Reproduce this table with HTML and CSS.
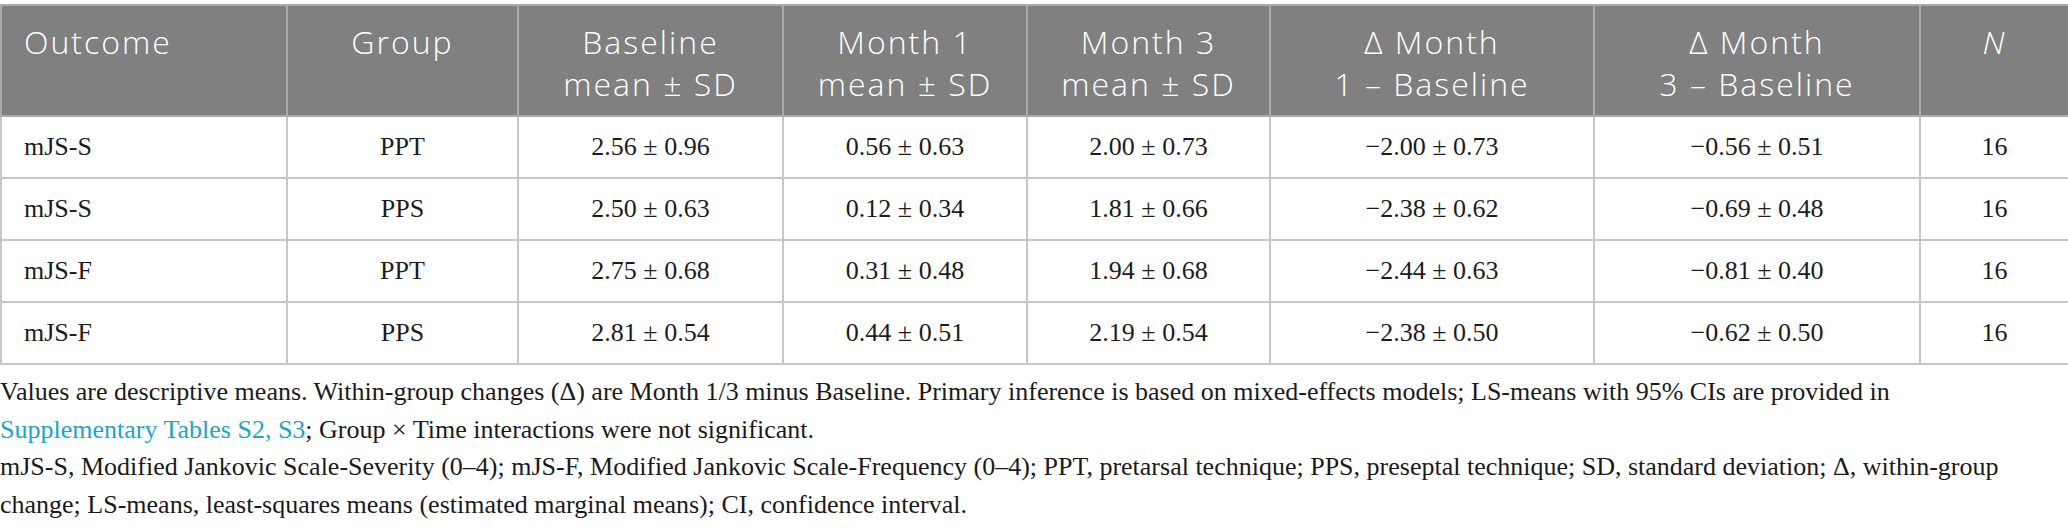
FILE: index.html
```html
<!DOCTYPE html>
<html lang="en">
<head>
<meta charset="utf-8">
<title>Table</title>
<link rel="stylesheet" href="styles.css">
</head>
<body>
<div class="wrap">
<table class="data">
  <colgroup>
    <col class="c1"><col class="c2"><col class="c3"><col class="c4"><col class="c5"><col class="c6"><col class="c7"><col class="c8">
  </colgroup>
  <thead>
    <tr>
      <th class="left">Outcome</th>
      <th>Group</th>
      <th>Baseline<br>mean ± SD</th>
      <th>Month 1<br>mean ± SD</th>
      <th>Month 3<br>mean ± SD</th>
      <th>Δ Month<br>1 – Baseline</th>
      <th>Δ Month<br>3 – Baseline</th>
      <th><i>N</i></th>
    </tr>
  </thead>
  <tbody>
    <tr><td class="left">mJS-S</td><td>PPT</td><td>2.56 ± 0.96</td><td>0.56 ± 0.63</td><td>2.00 ± 0.73</td><td>−2.00 ± 0.73</td><td>−0.56 ± 0.51</td><td>16</td></tr>
    <tr><td class="left">mJS-S</td><td>PPS</td><td>2.50 ± 0.63</td><td>0.12 ± 0.34</td><td>1.81 ± 0.66</td><td>−2.38 ± 0.62</td><td>−0.69 ± 0.48</td><td>16</td></tr>
    <tr><td class="left">mJS-F</td><td>PPT</td><td>2.75 ± 0.68</td><td>0.31 ± 0.48</td><td>1.94 ± 0.68</td><td>−2.44 ± 0.63</td><td>−0.81 ± 0.40</td><td>16</td></tr>
    <tr><td class="left">mJS-F</td><td>PPS</td><td>2.81 ± 0.54</td><td>0.44 ± 0.51</td><td>2.19 ± 0.54</td><td>−2.38 ± 0.50</td><td>−0.62 ± 0.50</td><td>16</td></tr>
  </tbody>
</table>
<div class="notes">
  <p>Values are descriptive means. Within-group changes (Δ) are Month 1/3 minus Baseline. Primary inference is based on mixed-effects models; LS-means with 95% CIs are provided in <a class="link" href="#">Supplementary Tables S2, S3</a>; Group × Time interactions were not significant.</p>
  <p>mJS-S, Modified Jankovic Scale-Severity (0–4); mJS-F, Modified Jankovic Scale-Frequency (0–4); PPT, pretarsal technique; PPS, preseptal technique; SD, standard deviation; Δ, within-group change; LS-means, least-squares means (estimated marginal means); CI, confidence interval.</p>
</div>
</div>
</body>
</html>
```

FILE: styles.css
```css
html, body {
  margin: 0;
  padding: 0;
  background: #ffffff;
}

.wrap {
  padding-top: 4px;
  width: 2068px;
}

.data {
  border-collapse: collapse;
  table-layout: fixed;
  width: 2068px;
}

.c1 { width: 286px; }
.c2 { width: 231px; }
.c3 { width: 265px; }
.c4 { width: 244px; }
.c5 { width: 243px; }
.c6 { width: 324px; }
.c7 { width: 326px; }
.c8 { width: 149px; }

.data th {
  background: #7f807f;
  color: #ffffff;
  font-family: "Open Sans", "Noto Sans", sans-serif;
  font-weight: 300;
  font-size: 32px;
  letter-spacing: 2px;
  line-height: 42px;
  text-align: center;
  vertical-align: top;
  padding: 15px 10px 10px;
  border: 2px solid #a9aaa9;
  height: 110px;
  box-sizing: border-box;
}

.data td {
  font-family: "Liberation Serif", "Times New Roman", serif;
  font-size: 26px;
  color: #1c1c1c;
  text-align: center;
  vertical-align: middle;
  height: 62px;
  box-sizing: border-box;
  padding: 0 10px;
  border: 2px solid #c6c6c6;
}

.data .left {
  text-align: left;
  padding-left: 22px;
}

.notes {
  padding-top: 8px;
  width: 2045px;
}

.notes p {
  margin: 0;
  font-family: "Liberation Serif", "Times New Roman", serif;
  font-size: 26px;
  line-height: 37.5px;
  color: #1a1a1a;
}

.link {
  color: #1ba5bf;
  text-decoration: none;
}
```
